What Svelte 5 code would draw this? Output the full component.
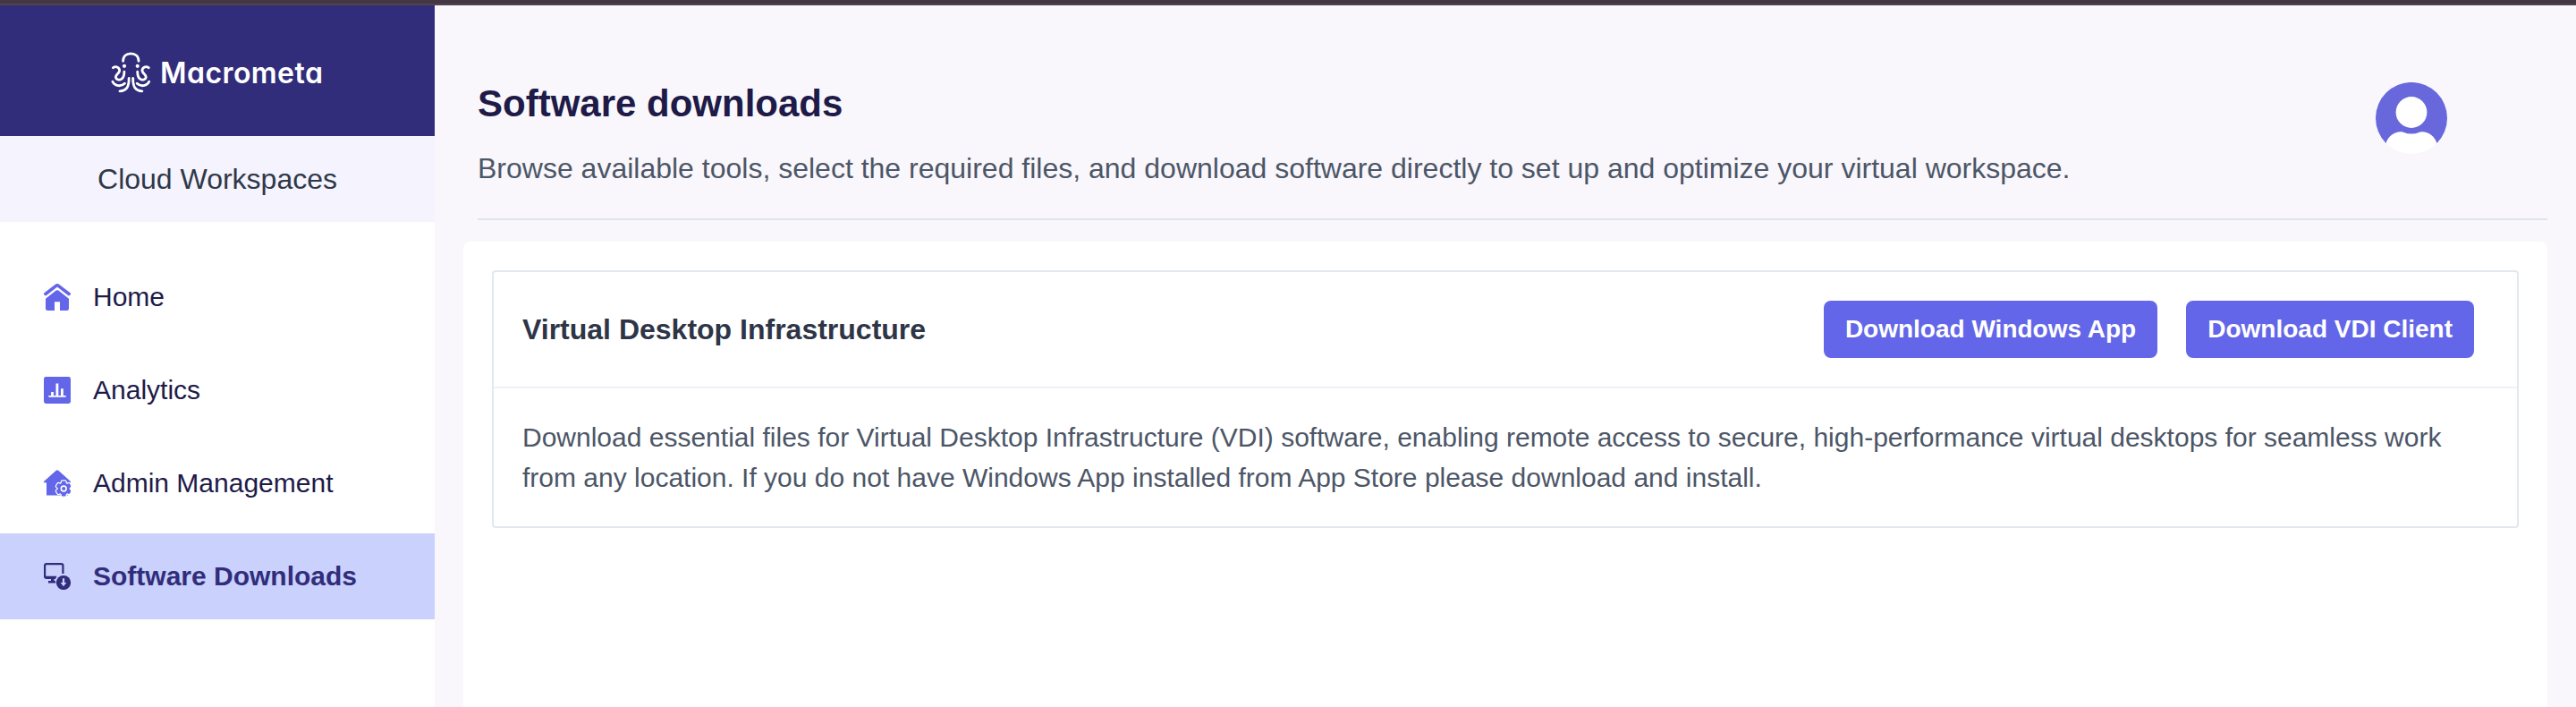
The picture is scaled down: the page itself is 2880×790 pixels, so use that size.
<script>
  const items = ['Home', 'Analytics', 'Admin Management', 'Software Downloads'];
  const active = 'Software Downloads';
  const teeth = [0, 60, 120, 180, 240, 300];
</script>

<div class="page">
  <div class="strip"></div>
  <div class="shell">
    <aside>
      <div class="brand">
        <svg width="44" height="46" viewBox="0 0 44 46" fill="none" stroke="#fff" stroke-width="2.8" stroke-linecap="round">
          <path d="M13.6 10.3C13.6 5 17.2 1.9 22.3 1.9S31 5 31 10.3" />
          <circle cx="15" cy="15.8" r="2.1" fill="#fff" stroke="none" />
          <circle cx="29.7" cy="15.8" r="2.1" fill="#fff" stroke="none" />
          <path d="M2.4 17.7C5.8 15.4 10 17.3 9.6 21.3C9.2 24.3 4.600 25.4 5.500 28.8C6.500 32.300 14.900 33.300 14.900 22.2" />
          <path d="M42.2 17.7C38.8 15.4 34.6 17.3 35 21.3C35.4 24.3 40 25.4 39.1 28.8C38.1 32.3 29.7 33.3 29.7 22.2" />
          <path d="M1.9 33.2C4.5 38.6 11.5 39 15.4 35.3M42.7 33.2C40.1 38.6 33.1 39 29.2 35.3" />
          <path d="M20.1 29.4C20.4 39 17.3 43.6 9.9 43.8M24.7 29.4C24.4 39 27.5 43.6 34.9 43.8" />
        </svg>
        <span>Macrometa</span>
      </div>
      <div class="product">Cloud Workspaces</div>
      <nav>
        {#each items as item}
          <a class:active={item === active}>
            <svg width="30" height="30" viewBox="0 0 30 30" fill="currentColor">
              {#if item === 'Home'}
                <path d="M1.9 11.5L13.7 2.4Q15 1.4 16.3 2.4L28.1 11.5" fill="none" stroke="currentColor" stroke-width="3.6" stroke-linecap="round" />
                <path d="M13.7 7.6Q15 6.7 16.3 7.6L28 16.8V27.5Q28 30 25.5 30H18V20.3H12V30H4.5Q2 30 2 27.5V16.8Z" />
              {:else if item === 'Analytics'}
                <rect width="30" height="30" rx="2.4" />
                <path d="M6 21.8H24" stroke="#fff" stroke-width="1.8" stroke-linecap="round" />
                <path d="M9.5 22V17M14.9 22V7.5M20.4 22V13.2" stroke="#fff" stroke-width="2.8" />
              {:else if item === 'Admin Management'}
                <path d="M13.7 .7Q15 -.4 16.3 .7L30 13V14.3H27V28.5H3V14.3H0V13Z" />
                <g fill="#fff" stroke="#fff" stroke-width="2.4">
                  <circle cx="22.2" cy="21" r="6.6" />
                  {#each teeth as t}<rect x="19.8" y="12.4" width="4.8" height="4" rx="1" transform="rotate({t} 22.2 21)" />{/each}
                </g>
                <circle cx="22.2" cy="21" r="6.6" />
                {#each teeth as t}<rect x="19.8" y="12.4" width="4.8" height="4" rx="1.2" transform="rotate({t} 22.2 21)" />{/each}
                <circle cx="22.2" cy="21" r="2.9" fill="none" stroke="#fff" stroke-width="1.6" />
              {:else}
                <path d="M3 0H19.5Q22.5 0 22.5 3V12H20.300V3Q20.300 2.200 19.500 2.200H3Q2.200 2.200 2.200 3V14.800H14.500L13 18H11.500V20H12.700L13.500 22.400H5V20H8V18H3Q0 18 0 15V3Q0 0 3 0Z" />
                <circle cx="22" cy="22" r="8.1" />
                <path d="M20.900 17.300H23.100V22H25.400L22 26.200L18.600 22H20.900Z" fill="#c9d1fc" />
              {/if}
            </svg>
            <span>{item}</span>
          </a>
        {/each}
      </nav>
    </aside>
    <main>
      <header>
        <div>
          <h1>Software downloads</h1>
          <p>Browse available tools, select the required files, and download software directly to set up and optimize your virtual workspace.</p>
        </div>
        <svg class="avatar" width="80" height="80" viewBox="0 0 80 80">
          <path d="M11.5 68A40 40 0 1 1 68.5 68Z" fill="#6868dc" />
          <circle cx="40" cy="33.5" r="17.4" fill="#fff" />
          <path d="M11.5 68C14.5 59 23 53.8 31 55.7Q40 59.500 49 55.700C57 53.800 65.500 59 68.500 68A40 40 0 0 1 11.500 68Z" fill="#fff" />
        </svg>
      </header>
      <section class="panel">
        <article>
          <div class="top">
            <h2>Virtual Desktop Infrastructure</h2>
            <div class="actions">
              <button>Download Windows App</button>
              <button>Download VDI Client</button>
            </div>
          </div>
          <p>Download essential files for Virtual Desktop Infrastructure (VDI) software, enabling remote access to secure, high-performance virtual desktops for seamless work from any location. If you do not have Windows App installed from App Store please download and install.</p>
        </article>
      </section>
    </main>
  </div>
</div>

<style>
  * { box-sizing: border-box; margin: 0; }
  .page { width: 2880px; height: 790px; overflow: hidden; display: flex; flex-direction: column; background: #f9f7fc; font-family: "Liberation Sans", Arial, sans-serif; }
  .strip { height: 6px; flex: none; background: #453643; border-bottom: 2px solid #4a444c; }
  .shell { flex: 1; display: flex; min-height: 0; }
  aside { width: 486px; flex: none; background: #fff; }
  .brand { height: 146px; background: #312d7b; color: #fff; display: flex; align-items: center; padding: 3px 0 0 124px; gap: 11px; }
  .brand svg { flex: none; }
  .brand span { font: 600 32px/40px Inter, sans-serif; font-feature-settings: "cv11"; letter-spacing: 0.45px; padding-top: 2px; }
  .product { height: 96px; background: #f5f3fe; color: #2f3848; font-size: 32px; line-height: 96px; text-align: center; }
  nav { display: flex; flex-direction: column; gap: 8px; padding-top: 36px; }
  nav a { height: 96px; display: flex; align-items: center; gap: 25px; padding-left: 49px; color: #6366e8; font-size: 30px; }
  nav span { color: #1e1b48; }
  nav .active { background: #c9d1fc; color: #312d7b; font-weight: 700; }
  nav .active span { color: #312d7b; }
  main { flex: 1; display: flex; flex-direction: column; padding: 0 32px; }
  header { height: 240px; flex: none; margin-left: 16px; border-bottom: 2px solid #dfe3ec; display: flex; justify-content: space-between; padding: 80px 112px 0 0; }
  h1 { font-size: 42px; line-height: 60px; color: #1e1b48; }
  header p { font-size: 32px; line-height: 48px; margin-top: 18px; color: #4c5667; white-space: nowrap; }
  .avatar { flex: none; margin-top: 6px; }
  .panel { flex: 1; margin-top: 24px; background: #fff; border-radius: 8px 8px 0 0; padding: 32px; }
  article { height: 288px; border: 2px solid #e3e8ee; border-radius: 4px; }
  .top { height: 130px; border-bottom: 2px solid #eef2f6; display: flex; align-items: center; justify-content: space-between; padding: 0 48px 0 32px; }
  h2 { font-size: 32px; color: #2d3546; }
  .actions { display: flex; gap: 32px; }
  button { height: 64px; padding: 0 24px; border: 0; border-radius: 8px; background: #6366e8; color: #fff; font: 700 28px "Liberation Sans", Arial, sans-serif; }
  article p { padding: 32px; font-size: 30px; line-height: 45px; color: #4c5667; }
</style>
